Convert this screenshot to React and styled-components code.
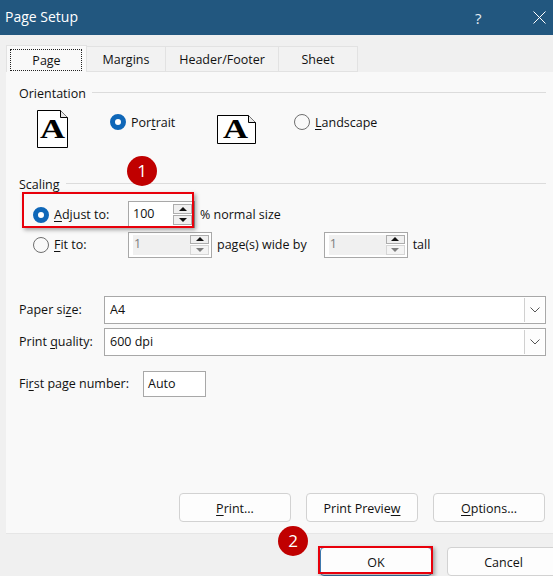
import styled, { createGlobalStyle } from "styled-components";

const GlobalStyle = createGlobalStyle`
    html, body {
        margin: 0;
        padding: 0;
        background: #f0f0f0;
    }
    * {
        box-sizing: border-box;
    }
`

const Dialog = styled.div`
    position: relative;
    width: 553px;
    height: 576px;
    overflow: hidden;
    display: flex;
    flex-direction: column;
    background: #f0f0f0;
    color: #111111;
    font-family: "Open Sans", "Noto Sans", "Liberation Sans", sans-serif;
    font-size: 12.5px;
    line-height: 16px;

    u {
        text-underline-offset: 2px;
        text-decoration-thickness: 1px;
    }
`

const TitleBar = styled.div`
    height: 35px;
    flex: none;
    display: flex;
    align-items: center;
    background: #22577f;
    color: #ffffff;
    padding: 0 7px 0 5px;
`

const Title = styled.span`
    flex: 1;
    font-size: 14px;
    margin-bottom: 2px;
`

const HelpMark = styled.span`
    width: 58px;
    font-size: 15px;
    color: #e8eef3;
`

const TabRow = styled.div`
    flex: none;
    display: flex;
    height: 27px;
    margin-top: 10px;
    padding-left: 6px;
`

const Tab = styled.div`
    width: ${(p) => p.$w}px;
    display: flex;
    align-items: center;
    justify-content: center;
    padding-top: ${(p) => (p.$active ? 3 : 2)}px;
    background: ${(p) => (p.$active ? "#f9f9f9" : "#f2f2f2")};
    border: 1px solid #e2e2e2;
    border-bottom: ${(p) => (p.$active ? "none" : "1px solid #e2e2e2")};
    border-left: ${(p) => (p.$active ? "1px solid #e2e2e2" : "none")};
    margin-top: ${(p) => (p.$active ? 0 : 1)}px;
    position: relative;
`

const FocusBox = styled.span`
    position: absolute;
    inset: 3px 4px 1px 3px;
    border: 1px dotted #222222;
`

const Panel = styled.div`
    flex: 1;
    display: flex;
    flex-direction: column;
    margin-left: 6px;
    padding: 13px 7px 11px 13px;
    background: #f9f9f9;
    border-bottom: 1px solid #e6e6e6;
`

const Legend = styled.div`
    display: flex;
    align-items: center;
    gap: 6px;
    height: 16px;
    padding-top: 2px;
    margin-top: ${(p) => p.$top || 0}px;

    &::after {
        content: "";
        flex: 1;
        height: 1px;
        margin-top: -4px;
        background: #dcdcdc;
    }
`

const OrientationRow = styled.div`
    display: flex;
    align-items: flex-start;
    height: 38px;
    margin-top: 9px;
`

const PageIcon = styled.svg`
    flex: none;
    margin-left: ${(p) => p.$left}px;
    margin-top: ${(p) => p.$top || 0}px;
`

const RadioLabel = styled.label`
    display: flex;
    align-items: center;
    gap: 5px;
    width: ${(p) => p.$w || "auto"};
    margin-left: ${(p) => p.$left || 0}px;
    margin-top: ${(p) => p.$top || 0}px;

    span:last-child {
        padding-top: ${(p) => (p.$top ? 2 : 0)}px;
    }
`

const Radio = styled.span`
    flex: none;
    width: 16px;
    height: 16px;
    border-radius: 50%;
    background: ${(p) => (p.$on ? "#ffffff" : "#f9f9f9")};
    border: ${(p) => (p.$on ? "5px solid #0f67b8" : "1px solid #6f6f6f")};
`

const ScaleRow = styled.div`
    display: flex;
    align-items: center;
    height: 27px;
    padding-left: 14px;
    margin-top: ${(p) => p.$top}px;
`

const Spinner = styled.div`
    display: flex;
    align-items: center;
    flex: none;
    width: ${(p) => p.$w}px;
    height: ${(p) => p.$h}px;
    padding: 2px 2px 2px 4px;
    border: 1px solid #a8a8a8;
    background: #ffffff;
    margin-left: ${(p) => p.$left || 0}px;
    margin-right: 5px;
`

const SpinValue = styled.span`
    flex: 1;
    align-self: stretch;
    display: flex;
    align-items: center;
    padding-left: ${(p) => (p.$off ? 1 : 0)}px;
    padding-bottom: 1px;
    background: ${(p) => (p.$off ? "#f0f0f0" : "#ffffff")};
    color: ${(p) => (p.$off ? "#7d7d7d" : "#111111")};
`

const SpinButtons = styled.div`
    flex: none;
    display: flex;
    flex-direction: column;
    gap: 1px;
    width: 19px;
    align-self: stretch;
`

const SpinButton = styled.span`
    flex: 1;
    display: flex;
    align-items: center;
    justify-content: center;
    background: ${(p) => (p.$off ? "#f4f4f4" : "#f0f0f0")};
    border: 1px solid ${(p) => (p.$off ? "#d6d6d6" : "#adadad")};

    &::before {
        content: "";
        width: 0;
        height: 0;
        border-left: 4px solid transparent;
        border-right: 4px solid transparent;
        ${(p) => (p.$down ? "border-top" : "border-bottom")}: 4px solid ${(p) => (p.$off ? "#7d7d7d" : "#111111")};
    }
`

const FieldRow = styled.div`
    display: flex;
    align-items: center;
    margin-top: ${(p) => p.$top}px;
`

const FieldLabel = styled.span`
    width: ${(p) => p.$w}px;
    flex: none;
`

const Select = styled.div`
    flex: 1;
    height: 28px;
    display: flex;
    align-items: center;
    justify-content: space-between;
    padding: 1px 1px 1px 5px;
    border: 1px solid #a8a8a8;
    background: #ffffff;
`

const SelectArrow = styled.span`
    width: 20px;
    align-self: stretch;
    display: flex;
    align-items: center;
    justify-content: center;
    background: #fdfdfd;
    border-left: 1px solid #d0d0d0;
`

const TextBox = styled.div`
    width: 63px;
    height: 26px;
    display: flex;
    align-items: center;
    padding-left: 4px;
    border: 1px solid #a8a8a8;
    background: #ffffff;
`

const ActionRow = styled.div`
    display: flex;
    justify-content: flex-end;
    gap: 15px;
    margin-top: auto;
    margin-right: 1px;
`

const DialogButton = styled.div`
    flex: none;
    width: ${(p) => p.$w || 112}px;
    height: ${(p) => p.$h || 29}px;
    display: flex;
    align-items: center;
    justify-content: center;
    padding-top: 2px;
    background: #fdfdfd;
    border: 1px solid ${(p) => (p.$primary ? "#3f78ad" : "#d2d2d2")};
    border-radius: 4px;
`

const Footer = styled.div`
    flex: none;
    height: 42px;
    display: flex;
    gap: 15px;
    padding: 13px 0 0 320px;
`

const RedBox = styled.div`
    position: absolute;
    left: ${(p) => p.$x}px;
    top: ${(p) => p.$y}px;
    width: ${(p) => p.$w}px;
    height: ${(p) => p.$h}px;
    border: 2px solid #e8000b;
    box-shadow: 2px 2px 4px rgba(0, 0, 0, 0.35);
`

const Badge = styled.div`
    position: absolute;
    left: ${(p) => p.$x}px;
    top: ${(p) => p.$y}px;
    width: 30px;
    height: 30px;
    border-radius: 50%;
    display: flex;
    align-items: center;
    justify-content: center;
    background: #c00000;
    color: #ffffff;
    font-size: 17px;
`

const PortraitIcon = () => (
    <PageIcon $left={18} width="31" height="38" viewBox="0 0 31 38">
        <path d="M.5.5H23.5L30.5 7.5V37.5H.5Z" fill="#fff" stroke="#000" />
        <path d="M23.5.5V7.5H30.5" fill="#e8e8e8" stroke="#000" />
        <text x="3" y="28" textLength="25" lengthAdjust="spacingAndGlyphs" fontFamily="Liberation Serif" fontWeight="700" fontSize="27" fill="#000">A</text>
    </PageIcon>
)

const LandscapeIcon = () => (
    <PageIcon $left={0} $top={5} width="39" height="29" viewBox="0 0 39 29">
        <path d="M.5.5H31.5L38.5 7.5V28.5H.5Z" fill="#fff" stroke="#000" />
        <path d="M31.5.5V7.5H38.5" fill="#e8e8e8" stroke="#000" />
        <text x="6" y="23" textLength="25" lengthAdjust="spacingAndGlyphs" fontFamily="Liberation Serif" fontWeight="700" fontSize="27" fill="#000">A</text>
    </PageIcon>
)

const Chevron = () => (
    <svg width="10" height="6" viewBox="0 0 10 6">
        <path d="M.5.5L5 5L9.5.5" fill="none" stroke="#555" strokeWidth="1" />
    </svg>
)

const CloseIcon = () => (
    <svg width="13" height="13" viewBox="0 0 13 13">
        <path d="M.5.5L12.5 12.5M12.5.5L.5 12.5" stroke="#fff" strokeWidth="1" />
    </svg>
)

const App = () => {
    return (
        <Dialog>
            <GlobalStyle />
            <TitleBar>
                <Title>Page Setup</Title>
                <HelpMark>?</HelpMark>
                <CloseIcon />
            </TitleBar>

            <TabRow>
                <Tab $w={81} $active><FocusBox />Page</Tab>
                <Tab $w={79}>Margins</Tab>
                <Tab $w={113}>Header/Footer</Tab>
                <Tab $w={79}>Sheet</Tab>
            </TabRow>

            <Panel>
                <Legend>Orientation</Legend>
                <OrientationRow>
                    <PortraitIcon />
                    <RadioLabel $left={42} $top={3} $w="107px"><Radio $on /><span>Por<u>t</u>rait</span></RadioLabel>
                    <LandscapeIcon />
                    <RadioLabel $left={38} $top={3}><Radio /><span><u>L</u>andscape</span></RadioLabel>
                </OrientationRow>

                <Legend $top={28}>Scaling</Legend>
                <ScaleRow $top={9}>
                    <RadioLabel $w="95px"><Radio $on /><span><u>A</u>djust to:</span></RadioLabel>
                    <Spinner $w={67} $h={27}>
                        <SpinValue>100</SpinValue>
                        <SpinButtons>
                            <SpinButton />
                            <SpinButton $down />
                        </SpinButtons>
                    </Spinner>
                    % normal size
                </ScaleRow>
                <ScaleRow $top={3}>
                    <RadioLabel $w="95px"><Radio /><span><u>F</u>it to:</span></RadioLabel>
                    <Spinner $w={84} $h={26}>
                        <SpinValue $off>1</SpinValue>
                        <SpinButtons>
                            <SpinButton />
                            <SpinButton $down $off />
                        </SpinButtons>
                    </Spinner>
                    page(s) wide by
                    <Spinner $w={84} $h={26} $left={17}>
                        <SpinValue $off>1</SpinValue>
                        <SpinButtons>
                            <SpinButton />
                            <SpinButton $down $off />
                        </SpinButtons>
                    </Spinner>
                    tall
                </ScaleRow>

                <FieldRow $top={38}>
                    <FieldLabel $w={85}>Paper si<u>z</u>e:</FieldLabel>
                    <Select>A4<SelectArrow><Chevron /></SelectArrow></Select>
                </FieldRow>
                <FieldRow $top={4}>
                    <FieldLabel $w={85}>Print <u>q</u>uality:</FieldLabel>
                    <Select>600 dpi<SelectArrow><Chevron /></SelectArrow></Select>
                </FieldRow>
                <FieldRow $top={15}>
                    <FieldLabel $w={124}>Fi<u>r</u>st page number:</FieldLabel>
                    <TextBox>Auto</TextBox>
                </FieldRow>

                <ActionRow>
                    <DialogButton><span><u>P</u>rint...</span></DialogButton>
                    <DialogButton><span>Print Previe<u>w</u></span></DialogButton>
                    <DialogButton><span><u>O</u>ptions...</span></DialogButton>
                </ActionRow>
            </Panel>

            <Footer>
                <DialogButton $primary>OK</DialogButton>
                <DialogButton $w={113}>Cancel</DialogButton>
            </Footer>

            <RedBox $x={22} $y={192} $w={172} $h={36} />
            <RedBox $x={318} $y={546} $w={115} $h={28} />
            <Badge $x={127} $y={156}>1</Badge>
            <Badge $x={278} $y={526}>2</Badge>
        </Dialog>
    )
}

export default App;
